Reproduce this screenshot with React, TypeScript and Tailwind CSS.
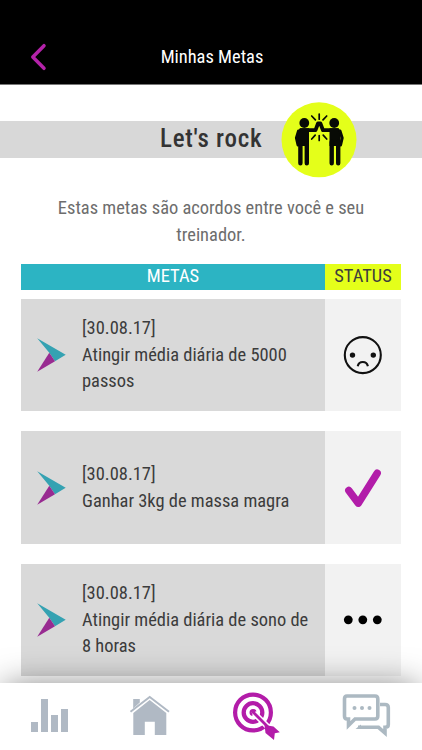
import React from "react";

type Goal = { date: string; lines: string[]; status: "sad" | "done" | "pending"; height: string };

const goals: Goal[] = [
  { date: "[30.08.17]", lines: ["Atingir média diária de 5000", "passos"], status: "sad", height: "h-[112px]" },
  { date: "[30.08.17]", lines: ["Ganhar 3kg de massa magra"], status: "done", height: "h-[113px]" },
  { date: "[30.08.17]", lines: ["Atingir média diária de sono de", "8 horas"], status: "pending", height: "h-[112px]" },
];

function HighFive() {
  return (
    <svg viewBox="0 0 76 76" className="h-[76px] w-[76px]">
      <circle cx="38" cy="37.8" r="37.5" fill="#e4ff1a" />
      <g fill="#080a05">
        <circle cx="23.3" cy="21" r="4.9" />
        <circle cx="53.2" cy="21" r="4.9" />
        <path d="M19 26.2H28V44H17V29Z" />
        <path d="M57.5 26.2H48.5V44H59.5V29Z" />
      </g>
      <g fill="none" stroke="#080a05" strokeLinecap="round" strokeLinejoin="round">
        <path d="M20 28.2H34.5L37 21.5H39.4L42 28.2H56.5" strokeWidth="3.8" />
        <path d="M17.5 29L15.4 36L17 43M59 29L61.2 36L59.6 43" strokeWidth="3" />
        <path d="M19.4 40V61.2M25.8 40V61.2M50.7 40V61.2M57.2 40V61.2" strokeWidth="4.4" />
        <path d="M38.2 12V17.2M30.7 14L34.4 17.9M45.7 14L42 17.9M38.2 33.6V38.4M34.2 33.2L30.7 37M42.2 33.2L45.7 37" strokeWidth="1.7" />
      </g>
    </svg>
  );
}

function Status({ kind }: { kind: Goal["status"] }) {
  return (
    <svg viewBox="0 0 40 40" className="h-10 w-10">
      {kind === "sad" && (
        <g>
          <circle cx="19.8" cy="20.1" r="18" fill="none" stroke="#111" strokeWidth="2.1" />
          <circle cx="9.5" cy="20.1" r="2.7" fill="#111" />
          <circle cx="30.3" cy="20.1" r="2.7" fill="#111" />
          <path d="M14.7 31.3C16 25.6 23.6 25.6 24.9 31.3" fill="none" stroke="#111" strokeWidth="2.1" />
        </g>
      )}
      {kind === "done" && (
        <path d="M5.8 22.5L15.3 35.2L34.2 5.2" fill="none" stroke="#b21da9" strokeWidth="7.4" strokeLinecap="round" strokeLinejoin="round" />
      )}
      {kind === "pending" && (
        <g>
          <circle cx="5.3" cy="19.8" r="4.4" />
          <circle cx="19.8" cy="19.8" r="4.4" />
          <circle cx="34.3" cy="19.8" r="4.4" />
        </g>
      )}
    </svg>
  );
}

function Arrow() {
  return (
    <svg viewBox="0 0 30 36" className="ml-4 h-9 w-[30px] shrink-0">
      <path d="M0.2 1.2L28.7 17.8L18 24.2L12.3 15.8Z" fill="#35a2b2" />
      <path d="M12.3 15.8L18 24.2L0.2 34.8Z" fill="#982b91" />
    </svg>
  );
}

export default function App() {
  return (
    <div className="relative h-[750px] w-[422px] overflow-hidden bg-white font-['Roboto_Condensed','Roboto',sans-serif] text-[18.45px] leading-[26.5px] text-[#3c3c3c] [font-stretch:75%]">
      <header className="grid h-[85px] grid-cols-[1fr_auto_1fr] items-center border-b border-[#777] bg-black pt-[30px] text-white">
        <svg viewBox="0 0 18 30" className="ml-[29px] h-[30px] w-[18px]">
          <path d="M15 3.7L3.8 15L15 26.3" fill="none" stroke="#b422a9" strokeWidth="3.5" strokeLinecap="round" strokeLinejoin="round" />
        </svg>
        <h1 className="whitespace-nowrap pl-[2px]">Minhas Metas</h1>
      </header>
      <section className="mt-9 flex h-[37px] items-center bg-[#d8d8d8]">
        <h2 className="ml-[160px] w-[121px] whitespace-nowrap text-[25px] font-[480] tracking-[0.75px] text-[#333]">Let's rock</h2>
        <HighFive />
      </section>
      <p className="mt-[37px] text-center text-[#6d6d6d]">Estas metas são acordos entre você e seu<br />treinador.</p>
      <main className="mx-[21px] mt-[15.5px]">
        <div className="flex h-[26.5px] text-center">
          <div className="w-[304px] bg-[#2cb4c3] leading-[25px] text-white">METAS</div>
          <div className="w-[76px] bg-[#e4ff1a] leading-[25px]">STATUS</div>
        </div>
        <div className="mt-[9px] flex flex-col gap-5">
          {goals.map((g, i) => (
            <div key={i} className={`flex ${g.height}`}>
              <div className="flex w-[304px] items-center bg-[#d9d9d9]">
                <Arrow />
                <p className="ml-[15px] whitespace-nowrap">
                  {g.date}
                  {g.lines.map((l) => <React.Fragment key={l}><br />{l}</React.Fragment>)}
                </p>
              </div>
              <div className="flex w-[76px] items-center justify-center bg-[#f2f2f2]"><Status kind={g.status} /></div>
            </div>
          ))}
        </div>
      </main>
      <nav className="absolute inset-x-0 bottom-0 h-[67px] bg-white shadow-[0_-1px_34px_-5px_rgba(0,0,0,0.55)]">
        <svg viewBox="0 683 422 67" className="h-[67px] w-[422px]">
          <path d="M31 722h7v10h-7zM41 699h7v33h-7zM51 715h7v17h-7zM61 709h7v23h-7z" fill="#b0b9c4" />
          <g fill="#b0b9c4">
            <path d="M133.3 735V713L149.7 700L166.3 713V735H154.8V721.7H144.8V735Z" />
            <path d="M133.2 699H139.8V702.5L133.2 708.5Z" />
            <path d="M130.5 711.7L149.7 697L169 711.7" fill="none" stroke="#b0b9c4" strokeWidth="1.9" />
          </g>
          <g fill="none" stroke="#b31ca9">
            <circle cx="253" cy="712.5" r="17.9" strokeWidth="4.2" />
            <circle cx="253" cy="712.5" r="9.3" strokeWidth="4.3" />
            <circle cx="253" cy="712.5" r="2.4" strokeWidth="2.2" />
            <path d="M254 713L273 732" stroke="white" strokeWidth="6" />
            <path d="M253 712L268 727" strokeWidth="2.7" strokeLinecap="round" />
            <path d="M264.5 725L273.5 726.5L279.8 732.3L274.8 733.3L274 740L265.5 733Z" fill="#b31ca9" stroke="none" />
          </g>
          <g fill="none" stroke="#acb9c2" strokeWidth="3.6">
            <path d="M347 696H375Q377.8 696 377.8 699V716Q377.8 719 375 719H355L348.5 725.5V719H347Q344.5 719 344.5 716V699Q344.5 696 347 696Z" />
            <path d="M380 704.5H385Q388.3 704.5 388.3 707.5V724.5Q388.3 727.3 385 727.3V733L378.5 727.3H358" />
            <path d="M355.5 729.1L361 724.5V729.1Z" fill="#acb9c2" stroke="none" />
            <g fill="#acb9c2" stroke="none"><circle cx="354.5" cy="708" r="2" /><circle cx="362" cy="708" r="2" /><circle cx="369.5" cy="708" r="2" /></g>
          </g>
        </svg>
      </nav>
    </div>
  );
}
